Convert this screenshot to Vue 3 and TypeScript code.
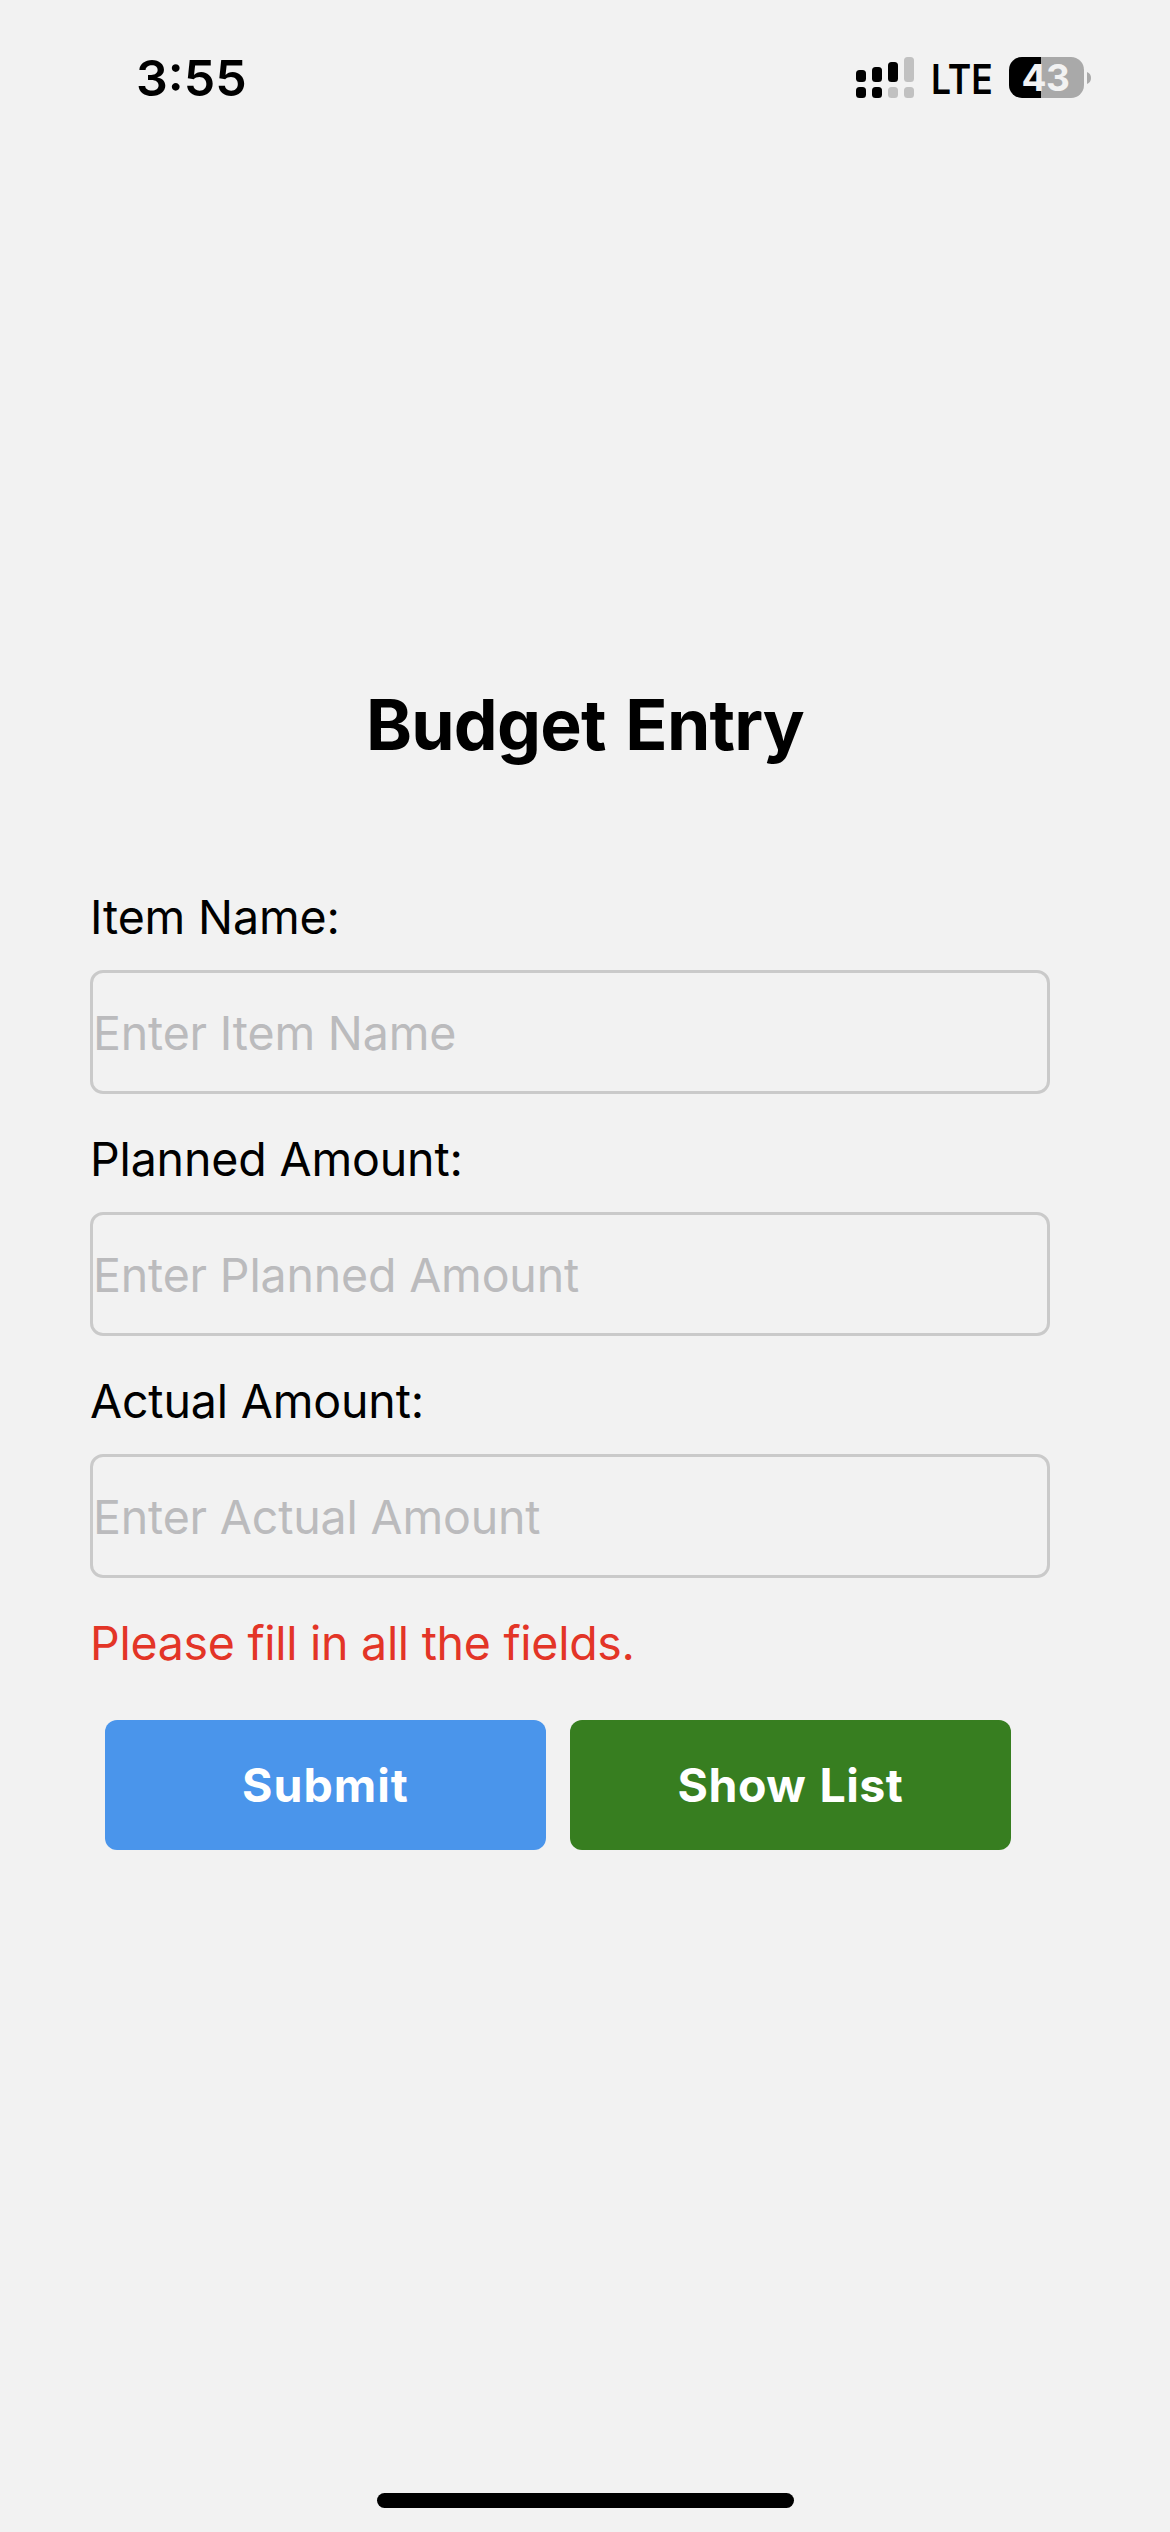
<script setup lang="ts">
import { ref } from 'vue'

interface Field {
  id: string
  label: string
  placeholder: string
}

const fields: Field[] = [
  { id: 'item', label: 'Item Name:', placeholder: 'Enter Item Name' },
  { id: 'planned', label: 'Planned Amount:', placeholder: 'Enter Planned Amount' },
  { id: 'actual', label: 'Actual Amount:', placeholder: 'Enter Actual Amount' },
]

const values = ref<Record<string, string>>({ item: '', planned: '', actual: '' })
const error = ref('Please fill in all the fields.')

function submit(): void {
  const complete = fields.every((field) => values.value[field.id].trim() !== '')
  error.value = complete ? '' : 'Please fill in all the fields.'
}
</script>

<template>
  <div class="screen">
    <header class="status-bar">
      <span class="time">3:55</span>
      <div class="indicators">
        <svg class="signal" width="58" height="41" viewBox="0 0 58 41">
          <g fill="#000">
            <rect x="0" y="13" width="10" height="12" rx="3.5" />
            <rect x="16" y="10" width="10" height="15" rx="3.5" />
            <rect x="32" y="5" width="10" height="20" rx="3.5" />
            <rect x="0" y="30" width="10" height="11" rx="3.5" />
            <rect x="16" y="30" width="10" height="11" rx="3.5" />
          </g>
          <g fill="#c1c1c1">
            <rect x="48" y="0" width="10" height="25" rx="3.5" />
            <rect x="32" y="30" width="10" height="11" rx="3.5" />
            <rect x="48" y="30" width="10" height="11" rx="3.5" />
          </g>
        </svg>
        <span class="network">LTE</span>
        <div class="battery">
          <span class="level">43</span>
          <svg class="nub" width="4" height="12" viewBox="0 0 4 12">
            <path d="M0 0C2.6 1 4 3.3 4 6S2.6 11 0 12Z" fill="#a9a9a9" />
          </svg>
        </div>
      </div>
    </header>

    <main class="content">
      <h1 class="title">Budget Entry</h1>
      <form class="form" @submit.prevent="submit">
        <div v-for="field in fields" :key="field.id" class="field">
          <label class="label" :for="field.id">{{ field.label }}</label>
          <input
            :id="field.id"
            v-model="values[field.id]"
            class="input"
            type="text"
            :placeholder="field.placeholder"
          />
        </div>
        <p class="error">{{ error }}</p>
        <div class="actions">
          <button class="button submit" type="submit">Submit</button>
          <button class="button list" type="button">Show List</button>
        </div>
      </form>
    </main>

    <footer class="home"><span class="home-bar"></span></footer>
  </div>
</template>

<style>
body {
  margin: 0;
  background: #f2f2f2;
}
</style>

<style scoped>
.screen {
  display: flex;
  flex-direction: column;
  width: 1170px;
  height: 2532px;
  background: #f2f2f2;
  color: #000;
  font-family: Inter, 'Liberation Sans', sans-serif;
  overflow: hidden;
}

.status-bar {
  display: flex;
  justify-content: space-between;
  align-items: center;
  flex: none;
  box-sizing: border-box;
  height: 155px;
  padding: 0 79px 0 136px;
}

.time {
  font-size: 50px;
  font-weight: 600;
  line-height: 60px;
}

.indicators {
  display: flex;
  align-items: center;
}

.network {
  width: 58px;
  margin-left: 17px;
  padding-top: 3px;
  font-size: 41.3px;
  font-weight: 560;
  line-height: 50px;
  white-space: nowrap;
  transform: scaleX(0.86);
  transform-origin: left;
}

.battery {
  display: flex;
  align-items: center;
  gap: 3px;
  margin-left: 20px;
}

.level {
  box-sizing: border-box;
  width: 75px;
  height: 41px;
  padding-right: 2px;
  border-radius: 13px;
  background: linear-gradient(90deg, #000 32px, #a9a9a9 32px);
  color: #f2f2f2;
  font-size: 37px;
  font-weight: 700;
  line-height: 41px;
  letter-spacing: -0.5px;
  text-align: center;
}

.nub {
  display: block;
}

.content {
  display: flex;
  flex-direction: column;
  flex: 1;
  padding: 527px 120px 0 90px;
}

.title {
  margin: 0 -30px 120px 0;
  font-size: 69.7px;
  font-weight: 700;
  line-height: 86px;
  letter-spacing: -0.8px;
  word-spacing: 4px;
  text-align: center;
}

.form {
  display: flex;
  flex-direction: column;
}

.field {
  display: flex;
  flex-direction: column;
  gap: 24px;
  margin-bottom: 36px;
}

.label,
.error {
  font-size: 46.5px;
  line-height: 58px;
  letter-spacing: -0.15px;
}

.input {
  box-sizing: border-box;
  width: 960px;
  height: 124px;
  margin: 0;
  padding: 2px 0 0;
  border: 3px solid #cacaca;
  border-radius: 13px;
  outline: none;
  background: transparent;
  color: #000;
  font-family: inherit;
  font-size: 46.5px;
  letter-spacing: -0.17px;
}

.input::placeholder {
  color: #bbbbbd;
  opacity: 1;
}

.error {
  min-height: 58px;
  margin: 0;
  color: #e33527;
  letter-spacing: -0.28px;
}

.actions {
  display: flex;
  gap: 24px;
  margin: 48px 0 0 15px;
}

.button {
  width: 441px;
  height: 130px;
  margin: 0;
  padding: 0;
  border: 0;
  border-radius: 12px;
  color: #fff;
  font-family: inherit;
  font-size: 46.5px;
  font-weight: 650;
  line-height: 58px;
}

.submit {
  background: #4a95eb;
  letter-spacing: 1px;
}

.list {
  background: #377e20;
  letter-spacing: 0.5px;
  word-spacing: 1.5px;
}

.home {
  display: flex;
  justify-content: center;
  flex: none;
  height: 39px;
}

.home-bar {
  width: 417px;
  height: 15px;
  border-radius: 8px;
  background: #000;
}
</style>
